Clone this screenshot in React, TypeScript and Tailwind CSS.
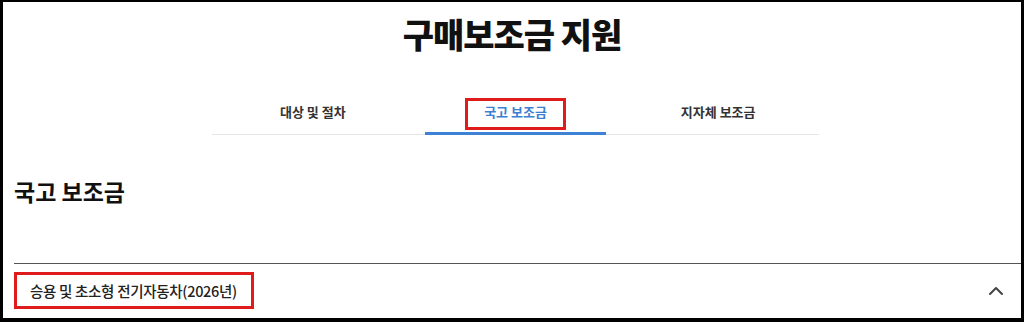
const tabs = ["대상 및 절차", "국고 보조금", "지자체 보조금"];

export default function App() {
  return (
    <div
      className="h-[322px] w-[1024px] overflow-hidden bg-white"
      style={{ fontFamily: '"Noto Sans CJK KR", "Noto Sans", sans-serif' }}
    >
      <div className="flex h-full flex-col border-t-2 border-r-[3px] border-b-4 border-l-[3px] border-black">
        <h1 className="mt-[10px] text-center text-[34px] leading-[44px] font-black tracking-[-1px] text-[#111]">
          구매보조금 지원
        </h1>

        <div className="mt-[45px] flex justify-center">
          <div className="ml-[7px] flex w-[607px] gap-[21px] border-b border-[#e6e6e6] px-[10px]">
            {tabs.map((t, i) => (
              <div
                key={t}
                className={
                  i === 1
                    ? "relative -mb-px flex h-[34px] w-[182px] items-start justify-center border-b-[3px] border-[#3d82d4]"
                    : "relative flex h-[33px] w-[182px] items-start justify-center"
                }
              >
                {i === 1 && (
                  <span className="absolute top-[-3px] left-[40px] h-[32px] w-[101px] border-[3px] border-[#e01b1b]" />
                )}
                <span
                  className={
                    i === 1
                      ? "text-[13px] leading-[22px] font-semibold text-[#3d7fd0]"
                      : "text-[13px] leading-[22px] font-semibold text-[#333]"
                  }
                >
                  {t}
                </span>
              </div>
            ))}
          </div>
        </div>

        <h2 className="mt-[41px] pl-[11px] text-[23px] leading-[30px] font-bold text-[#111]">
          국고 보조금
        </h2>

        <div className="mt-[57px] ml-[11px] border-t border-[#555]">
          <div className="flex items-center justify-between pt-[8px] pr-[17px]">
            <div className="flex h-[37px] w-[240px] items-center border-[3px] border-[#e01b1b] pl-[13px]">
              <span className="text-[14.5px] font-medium tracking-[-0.3px] text-[#222]">
                승용 및 초소형 전기자동차(2026년)
              </span>
            </div>
            <svg
              width="16"
              height="10"
              viewBox="0 0 16 10"
              fill="none"
              stroke="#444"
              strokeWidth="2"
              strokeLinecap="round"
              strokeLinejoin="round"
            >
              <path d="M2 8l6-6 6 6" />
            </svg>
          </div>
        </div>
      </div>
    </div>
  );
}
